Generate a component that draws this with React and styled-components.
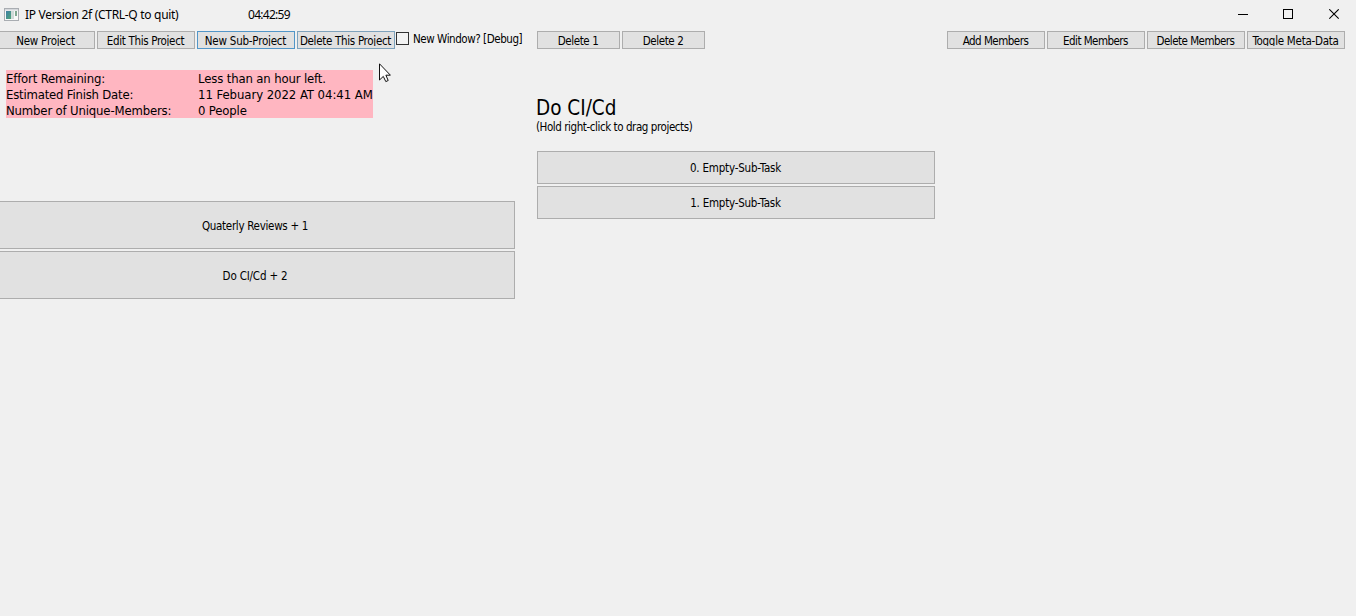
import React from 'react';
import styled, { createGlobalStyle } from 'styled-components';

const Global = createGlobalStyle`
  * { box-sizing: border-box; }
  html, body { margin: 0; background: #f0f0f0; overflow: hidden; }
  button { font: inherit; color: inherit; }
`;

const Window = styled.main`
  position: relative;
  width: 1356px;
  height: 616px;
  overflow: hidden;
  background: #f0f0f0;
  color: #000;
  font-family: 'DejaVu Sans Condensed', 'DejaVu Sans', sans-serif;
  font-stretch: condensed;
  font-size: 11.5px;
`;

const TitleBar = styled.header`
  display: flex;
  align-items: center;
  height: 29px;
  padding-left: 4px;
  font-family: 'Noto Sans', 'Open Sans', sans-serif;
  font-stretch: normal;
  font-size: 12px;
`;

const TitleText = styled.span`
  width: 223px;
  margin-left: 6px;
  letter-spacing: -0.3px;
  white-space: pre;
`;

const Clock = styled.span`
  letter-spacing: -0.72px;
`;

const WindowControls = styled.div`
  display: flex;
  gap: 35px;
  margin: 0 16px 0 auto;
`;

const Toolbar = styled.nav`
  display: flex;
  height: 22px;
  padding-top: 2px;
`;

const ButtonGroup = styled.div`
  display: flex;
  gap: 2px;
  margin-left: ${(p) => p.$offset}px;
`;

const ToolButton = styled.button`
  display: flex;
  align-items: flex-start;
  justify-content: center;
  width: ${(p) => p.$width || 98}px;
  height: 18px;
  padding: 0;
  border: 1px solid ${(p) => p.$border || '#adadad'};
  background: #e1e1e1;
  overflow: hidden;
`;

const ToolLabel = styled.span`
  display: block;
  width: 100%;
  height: 14px;
  padding: 2px 1px 0 0;
  line-height: 15px;
  overflow: hidden;
  white-space: nowrap;
  text-align: center;
  letter-spacing: ${(p) => p.$spacing || 0}px;
`;

const CheckLabel = styled.div`
  display: flex;
  width: 142px;
  height: 16px;
  padding: 1px 0 0 1px;
  line-height: 15px;
  white-space: nowrap;
  letter-spacing: -0.44px;
`;

const CheckBox = styled.span`
  width: 13px;
  height: 13px;
  margin-right: 4px;
  border: 1px solid #333;
  background: #f3f3f3;
`;

const Content = styled.div`
  display: flex;
  align-items: flex-start;
`;

const LeftPane = styled.section`
  width: 537px;
  padding-top: 19px;
`;

const Summary = styled.dl`
  display: grid;
  grid-template-columns: 192px 175px;
  grid-auto-rows: 16px;
  width: 367px;
  margin: 0 0 83px 6px;
  background: #ffb6c1;
  font-size: 13px;
  line-height: 17px;
  white-space: nowrap;
`;

const Term = styled.dt`
  letter-spacing: ${(p) => p.$spacing || 0}px;
`;

const Detail = styled.dd`
  margin: 0;
  letter-spacing: ${(p) => p.$spacing || 0}px;
`;

const List = styled.div`
  display: flex;
  flex-direction: column;
  gap: 2px;
  width: ${(p) => p.$width}px;
  margin-left: ${(p) => p.$offset || 0}px;
`;

const ListButton = styled.button`
  height: ${(p) => p.$height}px;
  padding: ${(p) => p.$drop || 0}px 1px 0 0;
  border: 1px solid #adadad;
  background: #e1e1e1;
  letter-spacing: ${(p) => p.$spacing || 0}px;
`;

const RightPane = styled.section`
  padding-top: 45px;
`;

const Heading = styled.h1`
  margin: 0 0 0 -1px;
  height: 24px;
  font-size: 20.5px;
  font-weight: 400;
  line-height: 24px;
`;

const Hint = styled.p`
  height: 31px;
  margin: 0 0 0 -1px;
  line-height: 15px;
  letter-spacing: -0.43px;
`;

const Pointer = styled.svg`
  position: absolute;
  left: 379px;
  top: 63px;
`;

const projectActions = [
  { text: 'New Project', spacing: -0.25 },
  { text: 'Edit This Project', spacing: -0.33 },
  { text: 'New Sub-Project', spacing: -0.22, border: '#5296c8' },
  { text: 'Delete This Project', spacing: -0.31, border: '#7ea2bc' },
];
const deleteActions = [
  { text: 'Delete 1', spacing: -0.4 },
  { text: 'Delete 2', spacing: -0.4 },
];
const memberActions = [
  { text: 'Add Members', spacing: -0.52 },
  { text: 'Edit Members', spacing: -0.53 },
  { text: 'Delete Members', spacing: -0.53 },
  { text: 'Toggle Meta-Data', spacing: -0.27 },
];

function Actions({ items, offset, width }) {
  return (
    <ButtonGroup $offset={offset}>
      {items.map((a) => (
        <ToolButton key={a.text} $width={width} $border={a.border}>
          <ToolLabel $spacing={a.spacing}>{a.text}</ToolLabel>
        </ToolButton>
      ))}
    </ButtonGroup>
  );
}

function AppIcon() {
  return (
    <svg width="15" height="14" viewBox="0 0 15 14">
      <defs>
        <linearGradient id="pane" x1="0" y1="0" x2="1" y2="1">
          <stop offset="0" stopColor="#3f7fa6" />
          <stop offset="1" stopColor="#4fa578" />
        </linearGradient>
      </defs>
      <rect x="0.5" y="0.5" width="14" height="12" fill="#f8f8f8" stroke="#a9adb2" />
      <rect x="1" y="1" width="13" height="1.5" fill="#d5d8dc" />
      <rect x="2" y="3" width="5" height="8" fill="url(#pane)" />
      <rect x="7" y="3" width="3" height="8" fill="#cfdad8" />
      <rect x="11" y="3" width="2" height="5" fill="#7fa790" />
    </svg>
  );
}

export default function App() {
  return (
    <Window>
      <Global />
      <TitleBar>
        <AppIcon />
        <TitleText>IP Version 2f (CTRL-Q to quit)</TitleText>
        <Clock>04:42:59</Clock>
        <WindowControls>
          <svg width="11" height="11"><path d="M1 5.5H11" stroke="#000" /></svg>
          <svg width="11" height="11"><rect x="0.5" y="0.5" width="9" height="9" fill="none" stroke="#000" /></svg>
          <svg width="11" height="11"><path d="M0.3 0.3L9.7 9.7M9.7 0.3L0.3 9.7" stroke="#000" strokeWidth="1.1" /></svg>
        </WindowControls>
      </TitleBar>
      <Toolbar>
        <Actions items={projectActions} offset={-3} />
        <CheckLabel><CheckBox />New Window? [Debug]</CheckLabel>
        <Actions items={deleteActions} offset={0} width={83} />
        <Actions items={memberActions} offset={242} />
      </Toolbar>
      <Content>
        <LeftPane>
          <Summary>
            <Term $spacing={-0.17}>Effort Remaining:</Term>
            <Detail $spacing={-0.14}>Less than an hour left.</Detail>
            <Term $spacing={-0.2}>Estimated Finish Date:</Term>
            <Detail $spacing={-0.05}>11 Febuary 2022 AT 04:41 AM</Detail>
            <Term $spacing={-0.16}>Number of Unique-Members:</Term>
            <Detail $spacing={-0.15}>0 People</Detail>
          </Summary>
          <List $width={519} $offset={-4}>
            <ListButton $height={48} $drop={2} $spacing={-0.3}>Quaterly Reviews + 1</ListButton>
            <ListButton $height={48} $drop={2} $spacing={-0.18}>Do CI/Cd + 2</ListButton>
          </List>
        </LeftPane>
        <RightPane>
          <Heading>Do CI/Cd</Heading>
          <Hint>(Hold right-click to drag projects)</Hint>
          <List $width={398}>
            <ListButton $height={33} $spacing={-0.2}>0. Empty-Sub-Task</ListButton>
            <ListButton $height={33} $spacing={-0.24}>1. Empty-Sub-Task</ListButton>
          </List>
        </RightPane>
      </Content>
      <Pointer width="12" height="20" viewBox="0 0 12 20">
        <path d="M0.5 0.8V17L4.3 13.4L6.8 18.6L9.2 17.5L6.9 12.2H11.4Z" fill="#fff" stroke="#111" strokeWidth="1" />
      </Pointer>
    </Window>
  );
}
